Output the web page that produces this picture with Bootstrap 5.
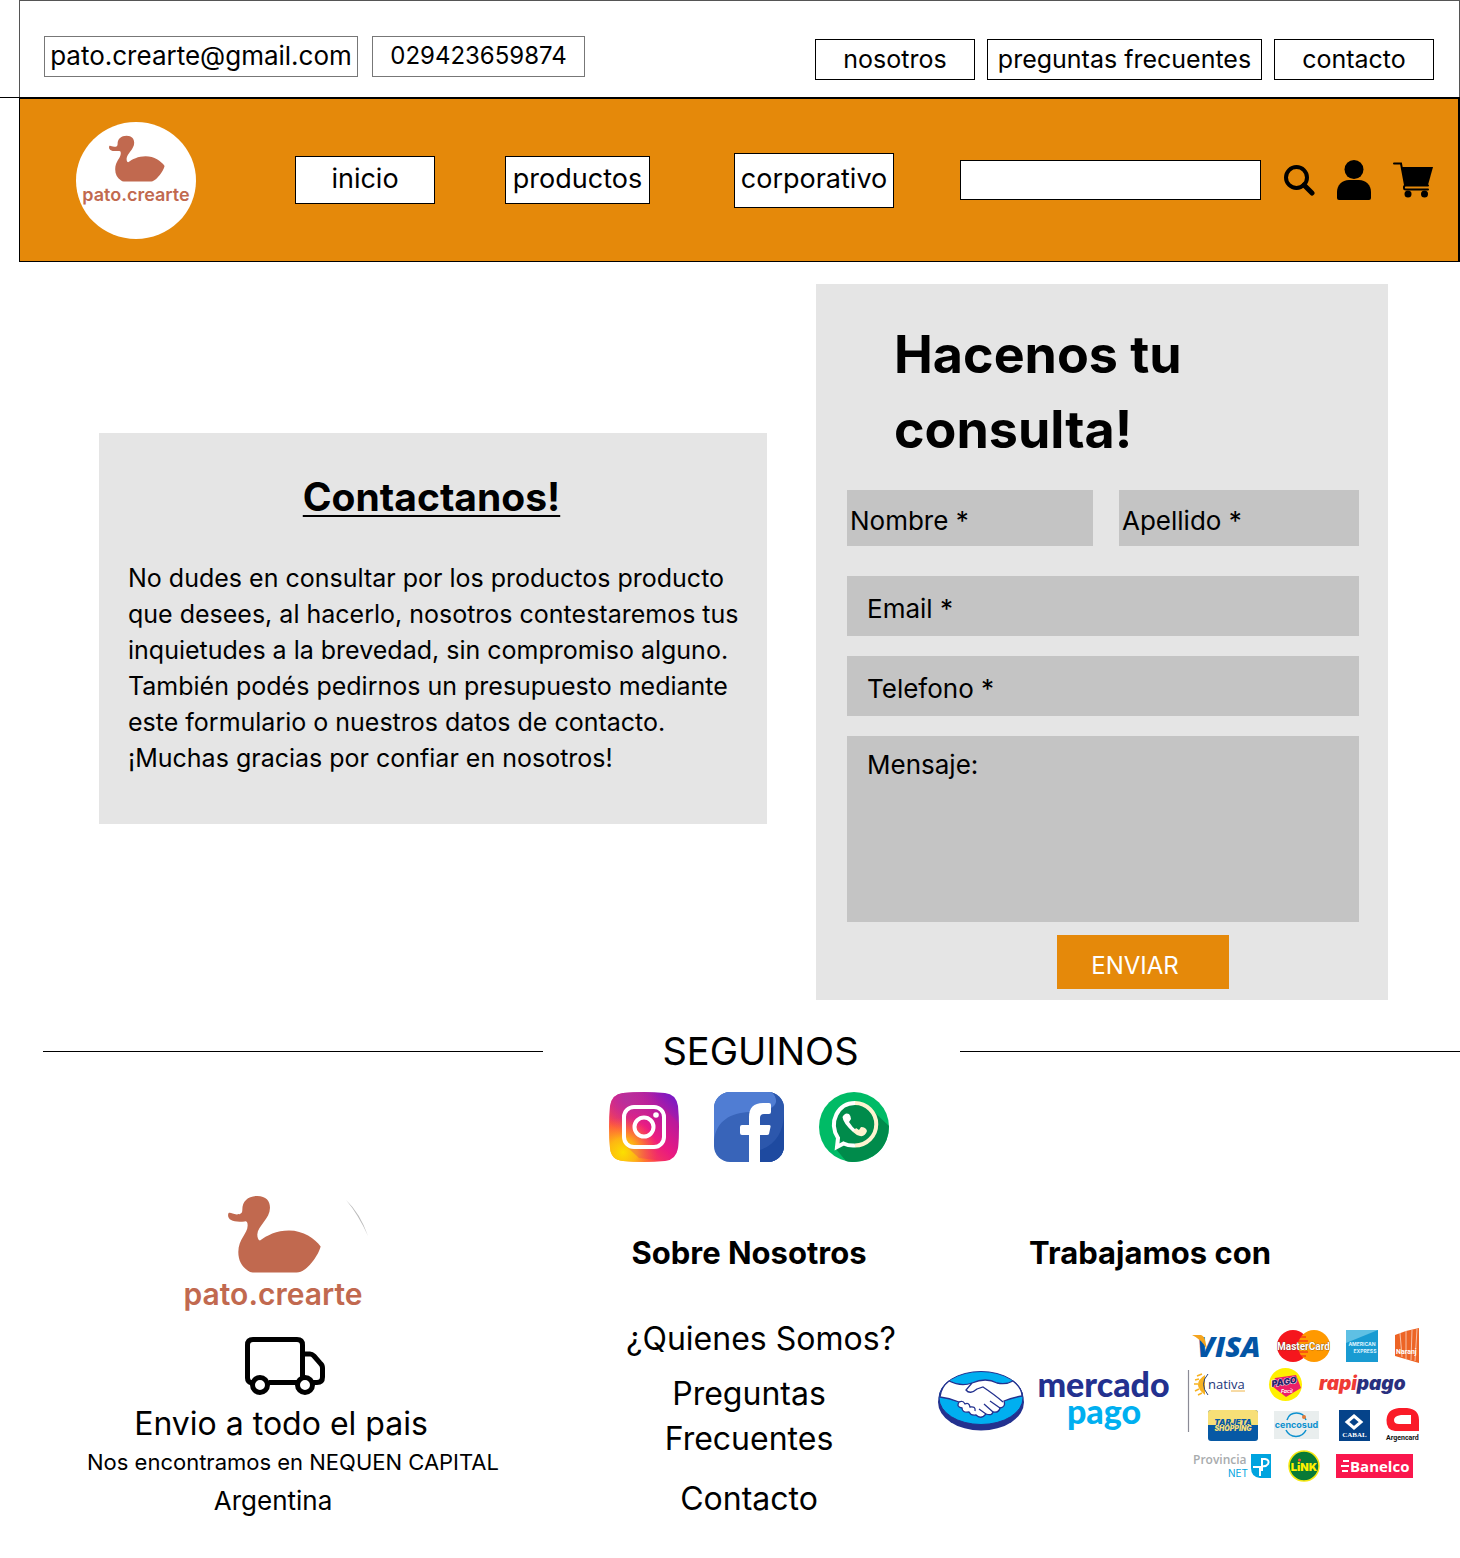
<!DOCTYPE html>
<html lang="es">
<head>
<meta charset="utf-8">
<meta name="viewport" content="width=device-width, initial-scale=1">
<title>pato.crearte - Contacto</title>
<link rel="stylesheet" href="https://cdn.jsdelivr.net/npm/bootstrap@5.3.0/dist/css/bootstrap.min.css">
<style>
:root { --naranja: #e5890a; --panel: #e5e5e5; --campo: #c4c4c4; --teja: #c1694f; }
body { font-family: Inter, "Open Sans", sans-serif; font-size: 25px; line-height: 36px; color: #000; background: #fff; }
a { color: #000; text-decoration: none; }
symbol { overflow: visible; }
.topbar { border-bottom: 1px solid #000; padding-left: 19px; }
.topbar-inner { border: 1px solid #555; border-bottom: 0; padding: 35px 25px 17px 24px; }
.topbar-inner a, .menu-link { border: 1px solid #000; background: #fff; display: flex; align-items: center; justify-content: center; white-space: nowrap; }
.topbar-inner a { height: 41px; padding-bottom: 2px; }
.topbar-left a { border-color: #777; }
.topbar-right { gap: 12px; padding-top: 3px; }
.topbar-left { gap: 14px; }
.topbar-left .w-mail { width: 314px; font-size: 26px; }
.topbar-left .w-tel { width: 213px; font-size: 24px; }
.w-link { width: 160px; } .w-faq { width: 275px; }
.mainbar { margin-left: 19px; min-height: 164px; background: var(--naranja); border: 1px solid #000; border-right-width: 2px; padding: 0 25px 0 56px; }
.brand-circle { width: 120px; height: 117px; border-radius: 50%; background: #fff; padding-top: 13px; margin-right: 99px; flex: none; text-align: center; line-height: 0; }
.menu-link { height: 48px; font-size: 27px; flex: none; padding-bottom: 3px; }
.m-inicio { width: 140px; margin-right: 70px; }
.m-prod { width: 145px; margin-right: 84px; }
.m-corp { width: 160px; height: 55px; margin-right: 66px; }
.search-box { flex: 1 1 160px; min-width: 120px; height: 40px; border: 1px solid #000; border-radius: 0; background: #fff; }
.tools { gap: 22px; margin-left: 22px; }
.tools button, .tools a { border: 0; background: none; padding: 0; line-height: 0; }
.contact-area { display: grid; grid-template-columns: minmax(0, 668fr) minmax(0, 572fr); gap: 49px; padding: 22px 72px 0 99px; align-items: start; }
.about-panel { background: var(--panel); margin-top: 149px; padding: 37px 12px 48px 29px; }
.about-panel h2 { font-size: 39px; line-height: 54px; font-weight: 700; text-align: center; text-decoration: underline; text-decoration-thickness: 2px; text-underline-offset: 4px; margin: 0 20px 36px 0; }
.about-panel p { margin: 0; white-space: nowrap; }
.form-panel { background: var(--panel); padding: 33px 29px 11px 31px; }
.form-panel h1 { font-size: 52px; line-height: 75px; font-weight: 700; margin: 0 0 23px 47px; }
.field { background: var(--campo); display: flex; align-items: center; height: 60px; padding: 6px 10px 0 20px; margin-bottom: 20px; gap: 8px; font-size: 26px; white-space: nowrap; cursor: text; }
.field input, .field textarea { flex: 1 1 0; min-width: 0; width: 0; border: 0; background: none; outline: 0; resize: none; }
.names { display: grid; grid-template-columns: minmax(0, 246fr) minmax(0, 240fr); gap: 26px; margin-bottom: 30px; }
.names .field { height: 56px; padding-left: 3px; margin: 0; }
.field-msg { height: 186px; align-items: flex-start; padding-top: 11px; margin-bottom: 13px; }
.field-msg textarea { height: 160px; padding: 0; }
.send { display: block; width: 172px; height: 54px; margin-left: 210px; border: 0; border-radius: 0; background: var(--naranja); color: #fff; font-size: 24px; padding: 8px 16px 0 0; }
.follow { padding: 21px 0 0 43px; display: grid; grid-template-columns: 500fr 417fr 500fr; align-items: center; }
.follow hr { margin: 0; border-top: 1px solid #000; opacity: 1; }
.follow h2 { font-size: 38px; line-height: 60px; font-weight: 400; margin: 0; padding-left: 18px; text-align: center; }
.social { gap: 35px; margin-top: 11px; line-height: 0; margin-left: 38px; }
.foot { display: grid; grid-template-columns: 562fr 374fr 524fr; text-align: center; padding-top: 33px; padding-bottom: 32px; line-height: 45px; font-size: 32px; }
.foot h3 { font-size: 31px; line-height: 45px; font-weight: 700; margin-bottom: 41px; }
.foot-col { padding-top: 35px; white-space: nowrap; }
.foot-col li { margin-bottom: 15px; }
.foot-col li.first { margin-bottom: 10px; }
.ship { margin-top: 5px; }
.place { font-size: 22px; line-height: 33px; }
.country { font-size: 26px; line-height: 36px; margin-top: 4px; }
.foot svg { display: block; }
.pay { width: calc(100% - 43px); height: auto; margin: 52px 0 0 2px; }
.foot-pay h3 { margin-bottom: 0; }
@media (max-width: 1300px) {
  .mainbar, .topbar-inner { flex-wrap: wrap; gap: 12px; }
  .brand-circle, .menu-link { margin-right: 12px; }
  .about-panel p { white-space: normal; }
  .about-panel br { display: none; }
}
@media (max-width: 1000px) {
  .contact-area, .foot { grid-template-columns: 1fr; padding-left: 16px; padding-right: 16px; }
  .about-panel { margin-top: 0; }
  .topbar-left, .topbar-right { flex-wrap: wrap; }
}
</style>
<script src="https://cdn.jsdelivr.net/npm/bootstrap@5.3.0/dist/js/bootstrap.bundle.min.js"></script>
</head>
<body>
<svg width="0" height="0" class="position-absolute" aria-hidden="true">
  <symbol id="logo" viewBox="0 0 180 118">
    <path transform="translate(-113 -14.6) scale(.3333)" fill="#c1694f" d="M475 99C480 94 488 102 500 102C513 102 517 98 517 88C517 62 535 47 562 47C588 47 600 62 600 82C600 115 563 137 562 162C562 172 565 179 570 180C590 165 620 150 657 150C700 150 735 175 752 198C745 225 715 266 692 274Q686 276 680 276L548 276Q540 276 533 270C515 258 505 240 505 215C505 175 533 160 533 135C533 125 530 122 524 123C490 127 470 118 475 99Z"/>
    <text x="90" y="110" text-anchor="middle" font-family="Inter, sans-serif" font-weight="600" font-size="30" fill="#c1694f">pato.crearte</text>
  </symbol>
</svg>

<header>
  <div class="topbar">
    <div class="topbar-inner d-flex justify-content-between align-items-start">
      <div class="topbar-left d-flex">
        <a class="w-mail" href="mailto:pato.crearte@gmail.com">pato.crearte@gmail.com</a>
        <a class="w-tel" href="tel:029423659874">029423659874</a>
      </div>
      <nav class="topbar-right d-flex" aria-label="Ayuda">
        <a class="w-link" href="#nosotros">nosotros</a>
        <a class="w-faq" href="#preguntas">preguntas frecuentes</a>
        <a class="w-link" href="#contacto">contacto</a>
      </nav>
    </div>
  </div>
  <nav class="mainbar d-flex align-items-center" aria-label="Principal">
    <a class="brand-circle" href="#" aria-label="Inicio"><svg class="overflow-visible" width="108" height="71"><use href="#logo"/></svg></a>
    <a class="menu-link m-inicio" href="#inicio">inicio</a>
    <a class="menu-link m-prod" href="#productos">productos</a>
    <a class="menu-link m-corp" href="#corporativo">corporativo</a>
    <input class="search-box px-2" type="search" aria-label="Buscar">
    <div class="tools d-flex align-items-center">
      <button type="button" aria-label="Buscar"><svg width="32" height="32" viewBox="0 0 32 32" fill="none" stroke="#000"><circle cx="13.500" cy="13.500" r="10.500" stroke-width="4"/><path d="M21 21L29 29" stroke-width="5" stroke-linecap="round"/></svg></button>
      <a href="#cuenta" aria-label="Mi cuenta"><svg width="34" height="40" viewBox="0 0 34 40"><circle cx="17" cy="9.500" r="9.500"/><path d="M0 38V32C0 25 5 20 12 20H22C29 20 34 25 34 32V38Q34 40 32 40H2Q0 40 0 38Z"/></svg></a>
      <a href="#carrito" aria-label="Carrito"><svg width="40" height="36" viewBox="0 0 40 36"><path d="M1 1.500H8L12 23M35 23.500H13Q10.500 23.500 11 26Q11 27.500 13 27.500H35" fill="none" stroke="#000" stroke-width="2" stroke-linecap="round"/><path d="M9 5H40L35 23H12Z"/><circle cx="15" cy="32" r="3.500"/><circle cx="31.500" cy="32" r="3.500"/></svg></a>
    </div>
  </nav>
</header>

<main>
  <section class="contact-area" id="contacto">
    <div class="about-panel">
      <h2>Contactanos!</h2>
      <p>No dudes en consultar por los productos producto<br> que desees, al hacerlo, nosotros contestaremos tus<br> inquietudes a la brevedad, sin compromiso alguno.<br> También podés pedirnos un presupuesto mediante<br> este formulario o nuestros datos de contacto.<br> ¡Muchas gracias por confiar en nosotros!</p>
    </div>
    <form class="form-panel">
      <h1>Hacenos tu<br>consulta!</h1>
      <div class="names">
        <label class="field" for="nombre">Nombre * <input id="nombre" type="text" required></label>
        <label class="field" for="apellido">Apellido * <input id="apellido" type="text" required></label>
      </div>
      <label class="field" for="email">Email * <input id="email" type="email" required></label>
      <label class="field" for="telefono">Telefono * <input id="telefono" type="tel" required></label>
      <label class="field field-msg" for="mensaje">Mensaje: <textarea id="mensaje"></textarea></label>
      <button class="send" type="submit">ENVIAR</button>
    </form>
  </section>

  <section>
    <div class="follow"><hr><h2>SEGUINOS</h2><hr></div>
    <div class="social d-flex justify-content-center">
      <a href="#instagram" aria-label="Instagram"><svg width="70" height="70" viewBox="0 0 70 70">
        <defs>
          <linearGradient id="ig1" x1="0" y1="1" x2="1" y2="0"><stop offset="0" stop-color="#ffc400"/><stop offset=".3" stop-color="#ff4b45"/><stop offset=".5" stop-color="#ee1c80"/><stop offset=".75" stop-color="#b01ba3"/><stop offset="1" stop-color="#6519d2"/></linearGradient>
          <radialGradient id="ig2" cx=".2" cy=".86" r=".5"><stop offset="0" stop-color="#fbe000"/><stop offset=".4" stop-color="#fdc50d" stop-opacity=".8"/><stop offset="1" stop-color="#ff6a3a" stop-opacity="0"/></radialGradient>
          <radialGradient id="ig3" cx=".25" cy=".1" r=".45"><stop offset="0" stop-color="#b5309c"/><stop offset="1" stop-color="#b5309c" stop-opacity="0"/></radialGradient>
        </defs>
        <path d="M14 1Q35-1 56 1Q67 2 69 14Q71 35 69 56Q67 68 56 69Q35 71 14 69Q2 68 1 56Q-1 35 1 14Q3 2 14 1Z" fill="url(#ig1)"/>
        <path d="M14 1Q35-1 56 1Q67 2 69 14Q71 35 69 56Q67 68 56 69Q35 71 14 69Q2 68 1 56Q-1 35 1 14Q3 2 14 1Z" fill="url(#ig3)"/>
        <path d="M14 1Q35-1 56 1Q67 2 69 14Q71 35 69 56Q67 68 56 69Q35 71 14 69Q2 68 1 56Q-1 35 1 14Q3 2 14 1Z" fill="url(#ig2)"/>
        <path d="M55 16L70 31V50Q69 67 56 69L30 66L18 55H50L56 48Z" fill="#e01483" opacity=".25"/>
        <rect x="15" y="15" width="40" height="40" rx="10" fill="none" stroke="#fff" stroke-width="4"/>
        <circle cx="35" cy="35" r="9.500" fill="none" stroke="#fff" stroke-width="4"/><circle cx="47" cy="23" r="2.800" fill="#fff"/>
      </svg></a>
      <a href="#facebook" aria-label="Facebook"><svg width="70" height="70" viewBox="0 0 70 70">
        <clipPath id="fbc"><rect width="70" height="70" rx="16"/></clipPath>
        <g clip-path="url(#fbc)"><rect width="70" height="70" fill="#3864b9"/><path d="M0 0H58C68 10 60 20 35 20C17 21 3 28 0 48Z" fill="#507dd3"/><path d="M57 0Q63 4 62 11Q60 20 35 20V70H70V0Z" fill="#2c57ac"/><path d="M70 22Q69 50 46 58V70H70Z" fill="#1e4aa0"/>
        <path d="M35 70V43H28Q26 43 26 41V35Q26 33 28 33H35V25Q35 11 49 11H55Q57 11 57 13V20Q57 22 55 22H50Q46 22 46 26V33H55Q57 33 56.500 35L55 42Q54.500 43 53 43H46V70Z" fill="#fff"/></g>
      </svg></a>
      <a href="#whatsapp" aria-label="WhatsApp"><svg width="70" height="70" viewBox="0 0 70 70">
        <circle cx="35" cy="35" r="35" fill="#00bb66"/><path d="M52 17L70 34Q69 62 42 69Q32 71 27 69L16 56Z" fill="#008b4b"/><circle cx="36" cy="33" r="22" fill="#008b4b"/>
        <path d="M36 53.500Q30 54 24.500 51.500L18 55L19 46C9 30 19 11 36 11" fill="none" stroke="#fff" stroke-width="4"/><path d="M36 11A21.200 21.200 0 0 1 36 53.500" fill="none" stroke="#fff3cf" stroke-width="4"/>
        <path d="M23.500 25Q26 20 30 22Q32 24 32 27L30 30Q33 35 38 39L34 40Q24 31 23.500 25Z" fill="#fff"/><path d="M37 36L40 38L42 35Q47 35 48 39Q46 45 41 44Q37 43 34 40Z" fill="#fff3cf"/>
      </svg></a>
    </div>
  </section>
</main>

<footer class="foot">
  <div class="d-flex flex-column align-items-center text-nowrap">
    <svg class="me-3 overflow-visible" width="180" height="118" role="img" aria-label="pato.crearte"><use href="#logo"/><path d="M163 5Q177 18 185 41Q175 19 163 5Z" fill="#bbb"/></svg>
    <svg class="mt-4 ms-2" width="80" height="59" viewBox="0 0 80 59" fill="none" stroke="#000" stroke-width="5"><path d="M7 46Q2.500 45 2.500 41V8Q2.500 2.500 8 2.500H52Q57.500 2.500 57.500 8V40M24 45.500H52M60 17H65Q67 17 69 19L75 26Q77.500 28 77.500 31V40Q77.500 45.500 72 45.500H68"/><circle cx="15" cy="48" r="7.500"/><circle cx="60" cy="48" r="7.500"/></svg>
    <div class="ship">Envio a todo el pais</div>
    <div class="place ms-4">Nos encontramos en NEQUEN CAPITAL</div>
    <div class="country me-3">Argentina</div>
  </div>
  <div class="foot-col" id="nosotros">
    <h3>Sobre Nosotros</h3>
    <ul class="list-unstyled m-0">
      <li class="first ms-4"><a href="#quienes">¿Quienes Somos?</a></li>
      <li><a href="#preguntas">Preguntas<br>Frecuentes</a></li>
      <li class="m-0"><a href="#contacto">Contacto</a></li>
    </ul>
  </div>
  <div class="foot-col foot-pay">
    <h3 class="me-5 pe-5">Trabajamos con</h3>
    <svg class="pay" viewBox="938 1328 481 158" role="img" aria-label="Medios de pago">
      <g font-family="Inter, sans-serif" font-weight="700">
        <ellipse cx="981" cy="1403" rx="43" ry="28.500" fill="#23318f"/><ellipse cx="981" cy="1399" rx="42" ry="26.500" fill="#00aff0" stroke="#23318f"/>
        <path d="M949 1382Q961 1388 972 1384Q986 1378 997 1384Q1006 1386 1013 1382Q1022 1389 1022 1397Q1011 1399 1004 1402Q1006 1408 1000 1409Q999 1414 993 1413Q992 1417 986 1415Q981 1421 976 1416Q971 1417 969 1413Q962 1414 962 1409Q956 1408 959 1403Q949 1399 940 1398Q941 1388 949 1382Z" fill="#fff" stroke="#23318f" stroke-width="1.300"/>
        <path d="M972 1384L966 1391Q970 1396 977 1390L983 1388Q995 1396 1003 1403M984 1405L993 1413M990 1402L1000 1409M979 1410L986 1415M959 1403Q963 1401 965 1405Q969 1403 970 1408Q976 1407 975 1412" fill="none" stroke="#23318f" stroke-width="1.300"/>
        <text x="1103.500" y="1398" text-anchor="middle" font-size="34" fill="#23318f" font-family="Lato, sans-serif" font-weight="900">mercado</text>
        <text x="1104" y="1425" text-anchor="middle" font-size="34" fill="#00aff0" font-family="Lato, sans-serif" font-weight="900">pago</text>
        <path d="M1188.500 1371V1433" stroke="#8b8b96" stroke-width="1.200"/>

        <text x="1197" y="1358" font-size="29" font-style="italic" font-weight="800" font-family="Open Sans, sans-serif" fill="#0355a5">VISA</text><path d="M1192 1336H1201Q1204 1337 1205 1341L1207 1350Q1201 1340 1192 1336Z" fill="#f5a41d"/>
        <circle cx="1293" cy="1347" r="16" fill="#f5161d"/><circle cx="1314" cy="1347" r="16" fill="#ff9900"/><path d="M1299 1338H1306M1299 1342H1308M1299 1353H1308M1301 1357H1306" stroke="#f5161d"/>
        <text x="1303.500" y="1351" text-anchor="middle" font-size="10" fill="#fff" stroke="#642" stroke-width=".6" paint-order="stroke" font-family="Roboto, sans-serif">MasterCard</text>
        <rect x="1346" y="1331" width="32" height="32" fill="#199bd2"/><path d="M1346 1331H1378L1346 1344Z" fill="#5fc0e4"/><text x="1362" y="1347" text-anchor="middle" font-size="5" fill="#dff4ff">AMERICAN</text><text x="1365" y="1354" text-anchor="middle" font-size="5" fill="#dff4ff">EXPRESS</text>
        <path d="M1395 1336Q1407 1331 1419 1329V1364L1395 1357Z" fill="#ed6425"/><path d="M1400 1334L1402 1358M1406 1332V1360M1412 1331L1411 1361M1417 1330L1415 1362" stroke="#fff" stroke-width=".6"/><text x="1396" y="1355" font-size="7" fill="#fff" font-family="Roboto, sans-serif">Naranj</text>

        <path d="M1205 1376Q1191 1385 1205 1396Z" fill="#f8b322"/><path d="M1202 1375L1197 1377M1199 1380L1195 1381M1198 1385H1194M1199 1390L1195 1392M1202 1394L1198 1396" stroke="#f8b322" stroke-width="1.500"/><path d="M1208 1375Q1199 1385 1208 1396" fill="none" stroke="#27417d"/><text x="1208" y="1390" font-size="13" font-weight="400" font-family="Open Sans, sans-serif" fill="#1d3679">nativa</text><path d="M1231 1392H1245" stroke="#f0b64b"/>
        <circle cx="1285.500" cy="1385.500" r="16.500" fill="#fff000"/><path d="M1275 1379L1296 1376L1301 1389L1286 1398L1272 1387Z" fill="#ec1f67"/><text x="1272" y="1388" transform="rotate(-9 1272 1388)" font-size="9" font-style="italic" font-weight="900" fill="#25256e" stroke="#fff" stroke-width=".7" paint-order="stroke">PAGO</text><text x="1281" y="1394" font-size="5" fill="#fff" font-style="italic">Facil</text>
        <text x="1319" y="1391" font-size="19" font-style="italic" font-weight="900" font-family="Inter, sans-serif" fill="#ef3a35">rapi<tspan fill="#29307e">pago</tspan></text>

        <rect x="1208" y="1411" width="50" height="31" rx="3" fill="#0759a5"/><path d="M1208 1426V1414Q1208 1411 1211 1411H1255Q1258 1411 1258 1414V1426Z" fill="#f7df77"/><text x="1233" y="1426" text-anchor="middle" font-size="8" font-style="italic" font-weight="900" fill="#0759a5">TARJETA</text><text x="1233" y="1432" text-anchor="middle" font-size="7" font-style="italic" font-weight="900" fill="#f7df77">SHOPPING</text>
        <rect x="1274" y="1412" width="45" height="28" fill="#e9eeee"/><path d="M1287 1421A10 10 0 0 1 1306 1421M1286 1431A11 11 0 0 0 1306 1431" fill="none" stroke="#0d91cf" stroke-width="1.500"/><circle cx="1304" cy="1418" r="2" fill="#e17c38"/><text x="1296.500" y="1429" text-anchor="middle" font-size="9" fill="#0d91cf">cencosud</text>
        <rect x="1339" y="1411" width="31" height="31" fill="#05438a"/><path d="M1354 1417L1361 1423L1354 1429L1347 1423Z" fill="none" stroke="#fff" stroke-width="3"/><text x="1354.500" y="1438" text-anchor="middle" font-size="7" font-family="Liberation Serif, serif" fill="#fff">CABAL</text>
        <path d="M1419 1432H1395Q1386 1431 1386.500 1421Q1387 1410 1399 1409H1407Q1419 1410 1419 1421ZM1411 1425V1416H1401Q1394 1417 1394 1421Q1394 1425 1399 1425Z" fill-rule="evenodd" fill="#fa1b28"/><text x="1386" y="1441" font-size="7" font-family="Roboto, sans-serif" fill="#111">Argencard</text>

        <text x="1193" y="1465" font-size="12" font-family="Open Sans, sans-serif" font-weight="600" fill="#a8abad">Provincia</text><text x="1228" y="1478" font-size="10" font-weight="400" fill="#00a4df">NET</text><path d="M1251 1455H1271V1479H1260Q1251 1478 1251 1469Z" fill="#00a4df"/><path d="M1262 1472V1460H1265Q1270 1461 1268 1465Q1266 1468 1262 1467M1253 1468H1260V1477" fill="none" stroke="#fff" stroke-width="2"/>
        <circle cx="1304" cy="1467" r="15" fill="#087a36" stroke="#f7e811" stroke-width="1.500"/><text x="1304" y="1472" text-anchor="middle" font-size="11" font-weight="900" fill="#fff000">LiNK</text><circle cx="1299.500" cy="1461" r="1.500" fill="#f43"/>
        <rect x="1336" y="1455" width="77" height="24" fill="#fa174d"/><path d="M1343 1462H1349M1341 1467H1349M1342 1472H1348" stroke="#fff" stroke-width="2"/><text x="1350" y="1473" font-size="15" font-family="Open Sans, sans-serif" fill="#fff">Banelco</text>
      </g>
    </svg>
  </div>
</footer>
</body>
</html>
